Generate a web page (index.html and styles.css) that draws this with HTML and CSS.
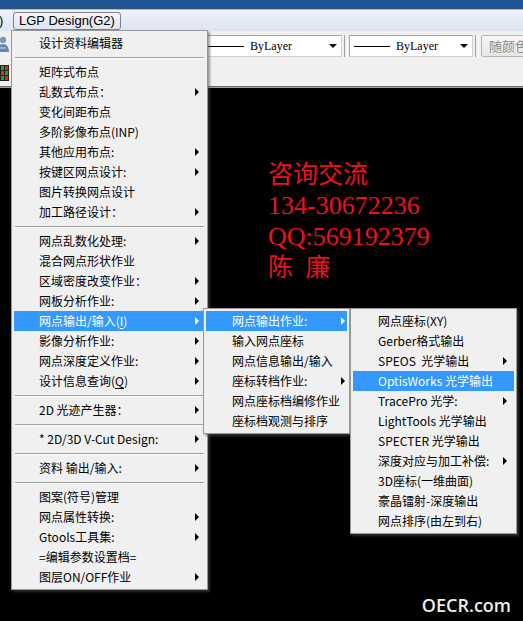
FILE: index.html
```html
<!DOCTYPE html>
<html lang="zh-CN">
<head>
<meta charset="utf-8">
<title>LGP Design</title>
<link rel="stylesheet" href="styles.css">
</head>
<body>
<div class="app">
  <div class="titlebar"></div>

  <div class="menubar">
    <span class="menubar-cut">)</span>
    <span class="menubar-item open">LGP Design(G2)</span>
  </div>

  <div class="toolbar tb-props">
    <span class="tool-icon">
      <svg width="10" height="18" viewBox="0 0 10 18">
        <circle cx="3" cy="5" r="3.2" fill="#7f96b8"/>
        <path d="M-3 17 C-3 11 0 9 3 9 C6 9 9 11 9 17 Z" fill="#6a84ab"/>
        <path d="M0 13 L6 13" stroke="#c9d4e4" stroke-width="1"/>
      </svg>
    </span>
    <div class="combo combo-color">
      <span class="combo-line"></span>
      <span class="combo-text">ByLayer</span>
      <span class="combo-arrow"></span>
    </div>
    <span class="grip"></span>
    <div class="combo combo-ltype">
      <span class="combo-line"></span>
      <span class="combo-text">ByLayer</span>
      <span class="combo-arrow"></span>
    </div>
    <span class="grip"></span>
    <span class="tool-btn">随颜色</span>
  </div>

  <div class="toolbar tb-draw">
    <span class="tool-icon">
      <svg width="9" height="16" viewBox="0 0 9 16">
        <rect x="0" y="0" width="9" height="16" fill="#222"/>
        <rect x="1" y="1" width="3" height="4" fill="#2c9b3a"/>
        <rect x="5" y="1" width="3" height="4" fill="#d62a2a"/>
        <rect x="1" y="6" width="3" height="4" fill="#d62a2a"/>
        <rect x="5" y="6" width="3" height="4" fill="#2c9b3a"/>
        <rect x="1" y="11" width="3" height="4" fill="#2c9b3a"/>
        <rect x="5" y="11" width="3" height="4" fill="#d62a2a"/>
      </svg>
    </span>
  </div>

  <div class="canvas">
    <div class="contact">
      <p>咨询交流</p>
      <p class="num">134-30672236</p>
      <p class="num">QQ:569192379</p>
      <p>陈&ensp;廉</p>
    </div>
    <div class="watermark">OECR.com</div>
  </div>

  <ul class="menu menu-main">
    <li class="item">设计资料编辑器</li>
    <li class="sep"></li>
    <li class="item">矩阵式布点</li>
    <li class="item sub">乱数式布点：</li>
    <li class="item">变化间距布点</li>
    <li class="item">多阶影像布点(INP)</li>
    <li class="item sub">其他应用布点:</li>
    <li class="item sub">按键区网点设计:</li>
    <li class="item">图片转换网点设计</li>
    <li class="item sub">加工路径设计：</li>
    <li class="sep"></li>
    <li class="item sub">网点乱数化处理:</li>
    <li class="item">混合网点形状作业</li>
    <li class="item sub">区域密度改变作业：</li>
    <li class="item sub">网板分析作业:</li>
    <li class="item sub hot">网点输出/输入(<u>I</u>)</li>
    <li class="item sub">影像分析作业:</li>
    <li class="item sub">网点深度定义作业:</li>
    <li class="item sub">设计信息查询(<u>Q</u>)</li>
    <li class="sep"></li>
    <li class="item sub">2D 光迹产生器：</li>
    <li class="sep"></li>
    <li class="item sub">* 2D/3D V-Cut Design:</li>
    <li class="sep"></li>
    <li class="item sub">资料 输出/输入:</li>
    <li class="sep"></li>
    <li class="item">图案(符号)管理</li>
    <li class="item sub">网点属性转换:</li>
    <li class="item sub">Gtools工具集:</li>
    <li class="item">=编辑参数设置档=</li>
    <li class="item sub">图层ON/OFF作业</li>
  </ul>

  <ul class="menu menu-io">
    <li class="item sub hot">网点输出作业:</li>
    <li class="item">输入网点座标</li>
    <li class="item">网点信息输出/输入</li>
    <li class="item sub">座标转档作业:</li>
    <li class="item">网点座标档编修作业</li>
    <li class="item">座标档观测与排序</li>
  </ul>

  <ul class="menu menu-out">
    <li class="item">网点座标(XY)</li>
    <li class="item">Gerber格式输出</li>
    <li class="item sub">SPEOS&nbsp; 光学输出</li>
    <li class="item hot">OptisWorks 光学输出</li>
    <li class="item sub">TracePro 光学:</li>
    <li class="item">LightTools 光学输出</li>
    <li class="item">SPECTER 光学输出</li>
    <li class="item sub">深度对应与加工补偿:</li>
    <li class="item">3D座标(一维曲面)</li>
    <li class="item">豪晶镭射-深度输出</li>
    <li class="item">网点排序(由左到右)</li>
  </ul>
</div>
</body>
</html>
```

FILE: styles.css
```css
* {
  box-sizing: border-box;
}

html, body {
  margin: 0;
  padding: 0;
  background: #000;
}

.app {
  position: relative;
  width: 523px;
  height: 621px;
  overflow: hidden;
  font-family: "Noto Sans CJK SC", "Noto Sans", sans-serif;
  font-size: 12px;
  color: #000;
}

/* window caption strip */
.titlebar {
  height: 10px;
  background: #1f5590;
  border-bottom: 1px solid #a9bad3;
  box-shadow: inset 0 -1px 0 #2d4f7c;
}

/* menu bar */
.menubar {
  height: 21px;
  display: flex;
  align-items: center;
  background: linear-gradient(#eef1f8, #dde4f1);
  font-family: "Liberation Sans", Arial, sans-serif;
  font-size: 13px;
}

.menubar-cut {
  flex: none;
  display: inline-block;
  width: 4px;
  overflow: hidden;
  text-indent: -1px;
  line-height: 17px;
}

.menubar-item {
  flex: none;
  margin-left: 9px;
  height: 18px;
  padding: 0 5px;
  line-height: 16px;
  border: 1px solid #7d8087;
  border-radius: 3px;
  background: linear-gradient(#f4f6fa, #dfe4ee);
}

/* toolbars */
.toolbar {
  display: flex;
  background: #f0f0f0;
}

.toolbar > * {
  flex: none;
}

.tb-props {
  height: 27px;
  align-items: flex-start;
  padding-top: 4px;
}

.tb-draw {
  height: 30px;
  align-items: flex-start;
  padding-top: 7px;
  border-bottom: 1px solid #a0a0a0;
  box-shadow: inset 0 -1px 0 #6b6b6b;
}

.tool-icon {
  display: block;
  width: 10px;
  line-height: 0;
}

.combo {
  height: 22px;
  display: flex;
  align-items: center;
  background: #fff;
  border: 1px solid #a5a5a5;
  border-right-color: #d0d0d0;
  border-bottom-color: #d0d0d0;
  font-family: "Liberation Serif", serif;
  font-size: 12px;
}

.combo-color {
  margin-left: 193px;
  width: 139px;
}

.combo-ltype {
  width: 124px;
}

.combo-line {
  width: 36px;
  height: 1px;
  margin-left: 4px;
  background: #000;
}

.combo-text {
  margin-left: 6px;
  flex: 1;
}

.combo-arrow {
  width: 0;
  height: 0;
  margin-right: 4px;
  border-left: 4px solid transparent;
  border-right: 4px solid transparent;
  border-top: 4px solid #000;
}

.grip {
  width: 7px;
  height: 22px;
  display: flex;
  justify-content: center;
}

.grip::before {
  content: "";
  width: 2px;
  height: 22px;
  border-left: 1px solid #a0a0a0;
  border-right: 1px solid #fff;
}

.tool-btn {
  margin-left: 1px;
  height: 22px;
  padding: 0 8px 0 7px;
  line-height: 20px;
  border: 1px solid #b5b5b5;
  border-radius: 2px;
  background: linear-gradient(#f7f7f7, #e6e6e6);
  color: #8d8d8d;
  font-size: 13px;
  white-space: nowrap;
}

/* drawing area */
.canvas {
  position: relative;
  height: 533px;
  background: #000;
}

.contact {
  padding: 71px 0 0 268px;
  color: #ec121b;
  font-family: "Liberation Serif", "Noto Sans CJK SC", serif;
  font-size: 25px;
}

.contact p {
  margin: 0;
  line-height: 31px;
  height: 31px;
  white-space: nowrap;
}

.contact .num {
  font-size: 26px;
}

.watermark {
  position: absolute;
  right: 12px;
  bottom: 4px;
  color: #ececec;
  font-family: "Open Sans", "Noto Sans", sans-serif;
  font-weight: 600;
  font-size: 18px;
}

/* dropdown menus */
.menu {
  position: absolute;
  margin: 0;
  padding: 2px;
  list-style: none;
  background: #f0f0f0;
  border: 1px solid #979797;
  box-shadow: 2px 2px 2px rgba(80, 80, 80, 0.55);
}

.menu-main {
  left: 11px;
  top: 30px;
  width: 197px;
}

.menu-io {
  left: 203px;
  top: 308px;
  width: 147px;
}

.menu-out {
  left: 350px;
  top: 308px;
  width: 167px;
}

.item {
  position: relative;
  height: 20px;
  line-height: 20px;
  padding-left: 25px;
  white-space: nowrap;
}

.menu-io .item {
  padding-left: 26px;
}

.item.hot {
  background: #3399ff;
  color: #fff;
}

.item u {
  text-underline-offset: 2px;
}

.item.sub::after {
  content: "";
  position: absolute;
  right: 6px;
  top: 6px;
  border-left: 4px solid #000;
  border-top: 4px solid transparent;
  border-bottom: 4px solid transparent;
}

.item.sub.hot::after {
  border-left-color: #fff;
}

.menu-io .item.sub::after {
  right: 2px;
}

.menu-out .item.sub::after {
  right: 7px;
}

.sep {
  height: 9px;
  padding: 4px 1px 0;
}

.sep::before {
  content: "";
  display: block;
  border-top: 1px solid #a0a0a0;
  border-bottom: 1px solid #fff;
}
```
